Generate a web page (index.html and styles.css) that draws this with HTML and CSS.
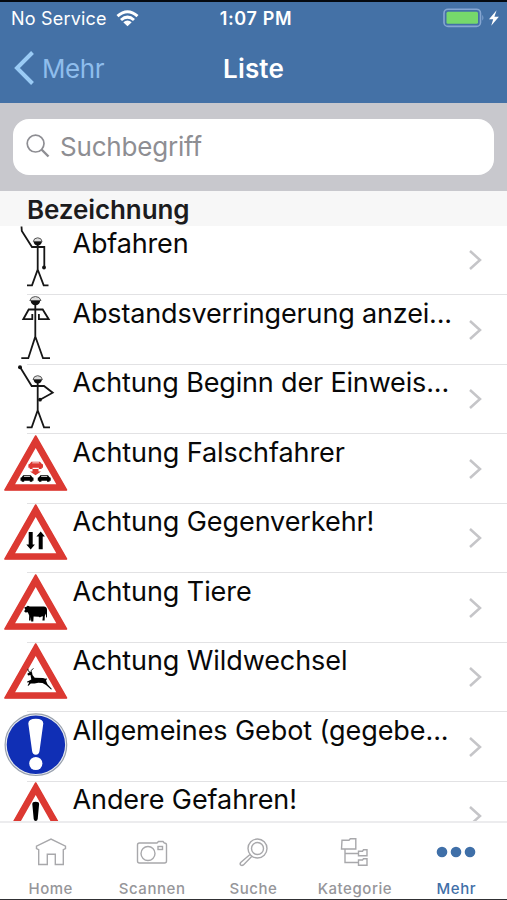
FILE: index.html
```html
<!DOCTYPE html>
<html lang="de">
<head>
<meta charset="utf-8">
<title>Liste</title>
<link rel="stylesheet" href="styles.css">
</head>
<body>
<div class="app">
  <header class="top">
    <div class="status">
      <div class="carrier"><span class="service">No Service</span>
        <svg width="23" height="17" viewBox="0 0 23 17" fill="none" stroke="#fff" stroke-width="3"><path d="M1.500 6.200Q11.500-2.800 21.500 6.200M5 10Q11.500 4.200 18 10"/><path d="M11.500 16.300L7.300 12.200Q11.500 8.800 15.700 12.200Z" fill="#fff" stroke="none"/></svg>
      </div>
      <span class="time">1:07 PM</span>
      <svg class="battery" width="58" height="20" viewBox="0 0 58 20"><rect x="1" y="1.200" width="36.500" height="17.200" rx="4" fill="none" stroke="#86a6d1" stroke-width="1.600"/><rect x="3.500" y="3.800" width="31.500" height="12" rx="1.500" fill="#76d96b"/><path d="M39.300 6.800q2.200 3 0 6z" fill="#86a6d1"/><path d="M53.600 2.300L46 11.200h4.200l-2 6.500 7.700-9h-4.500z" fill="#fff"/></svg>
    </div>
    <nav class="navbar">
      <a class="back"><svg width="21" height="34" viewBox="0 0 21 34" fill="none" stroke="#9acbf5" stroke-width="4"><path d="M18.500 1.500L3 17l15.500 15.500"/></svg><span>Mehr</span></a>
      <h1>Liste</h1>
    </nav>
  </header>
  <div class="search"><div class="field">
    <svg width="24" height="24" viewBox="0 0 24 24" fill="none" stroke="#8e8e93"><circle cx="9.600" cy="9.600" r="8.400" stroke-width="1.700"/><path d="M15.500 15.500l7 7" stroke-width="2.400"/></svg><span>Suchbegriff</span>
  </div></div>
  <h2 class="section"><span>Bezeichnung</span></h2>

  <svg class="defs" width="0" height="0">
    <symbol id="warn" viewBox="0 0 72 69.500"><path d="M35.700 1L5 55h61.500z" fill="#fff" stroke="#dc3932" stroke-width="1.600" stroke-linejoin="round"/><path d="M35.700.8L4.500 55.300h62.500zM35.700 13L56.300 49.300H15.100z" fill="#dc3932" fill-rule="evenodd"/></symbol>
    <symbol id="next" viewBox="0 0 14 22"><path d="M2 2L12 11 2 20" fill="none" stroke="#c5c5c8" stroke-width="2.500"/></symbol>
    <symbol id="car" viewBox="0 0 14 8"><path d="M3.200 1h7.600l1.500 1.900 1.200.6v3h-1.200V7.500H9.800V6.500H4.200v1H1.700v-1H.5v-3l1.200-.6z" fill="currentColor"/><path d="M4.200 1.700h5.600l.5.700H3.700z" fill="#fff"/></symbol>
  </svg>

  <main class="list">
    <div class="row"><svg class="pic line" viewBox="0 0 72 69.500"><path d="M21.500.5l.3 4.500L32 21h12.300v20M37.700 16v27.500L32 59.300h-5M37.700 43.500l6 15.800h4.800"/><path class="solid" d="M33.500 15.500h8.500q-.7 4-4.300 4t-4.200-4z"/><path class="helmet" d="M33.300 15.500q.6-3.700 4.400-3.700t4.400 3.700z"/><circle class="solid" cx="44" cy="41.500" r="1.900"/></svg><span class="label tight">Abfahren</span><svg class="next"><use href="#next"/></svg></div>
    <div class="row"><svg class="pic line" viewBox="0 0 72 69.500"><path d="M35.300 6v34.500l-7 21.700h-7M35.300 40.500L43 62.200h7M32.300 18v5.200h-9l5.400-9.700h14l6 9.700h-9.800V18"/><path class="solid" d="M30.500 4.500h9.800Q39.500 9.200 35.400 9.200t-4.900-4.700z"/><path class="helmet" d="M29.800 4.500Q31 .5 35.400.5T41 4.500z"/></svg><span class="label tight">Abstandsverringerung anzei...</span><svg class="next"><use href="#next"/></svg></div>
    <div class="row"><svg class="pic line" viewBox="0 0 72 69.500"><path d="M20 2l11.700 19H44l8.700 6.700L40 34.700M37.700 15v30.300l-6 17h-5M37.700 45.300l6.300 17h6"/><path class="solid" d="M33.500 14.500H42q-.7 4-4.300 4t-4.200-4z"/><path class="helmet" d="M33 14.500q.8-3.800 4.700-3.800t4.700 3.800z"/><circle class="solid" cx="20" cy="2.300" r="2"/><circle class="solid" cx="40" cy="34.700" r="1.900"/></svg><span class="label tight">Achtung Beginn der Einweis...</span><svg class="next"><use href="#next"/></svg></div>
    <div class="row"><svg class="pic" viewBox="0 0 72 69.500"><use href="#warn"/><use href="#car" x="20" y="39.300" width="14" height="8"/><use href="#car" x="37.200" y="39.300" width="14" height="8"/><g class="red"><use href="#car" x="27.700" y="25.500" width="16" height="9"/><path d="M32.500 34h6v2.500h2.500L35.500 40.300 30 36.500h2.500z" fill="currentColor"/></g></svg><span class="label">Achtung Falschfahrer</span><svg class="next"><use href="#next"/></svg></div>
    <div class="row"><svg class="pic" viewBox="0 0 72 69.500"><use href="#warn"/><path d="M28.700 28h4v12.500h2.200L30.700 45.500l-4.400-5h2.400zM38.700 45.300h4V32.500h2.200l-4.200-5-4.300 5h2.300z"/></svg><span class="label">Achtung Gegenverkehr!</span><svg class="next"><use href="#next"/></svg></div>
    <div class="row"><svg class="pic" viewBox="0 0 72 69.500"><use href="#warn"/><path d="M24.200 33.500l2.200-.8 1.400-1 2 .7 14 .1q3.200.3 3.200 3.200v7.800l-.9-.2-.2-3.700-1.100 2.400-.2 4.500h-2.200l.5-4.300-2 .5-1 .8-1-.8-5.300-.2-.3 5h-2.100l-.3-4.500-.3 3.500H29l.2-5-1.400-3.200-2.300.2-1.400-1.300 1.200-1.700z"/></svg><span class="label">Achtung Tiere</span><svg class="next"><use href="#next"/></svg></div>
    <div class="row"><svg class="pic" viewBox="0 0 72 69.500"><use href="#warn"/><path d="M27.300 30.700l3-2 1.700.6.500 2.700 2.200 2.800 8.300.1 2.500.9 1-.8.2 1.700-.7.8 1.500 3.700 4.400 4.800-.8.4-5.100-4.400-3.500-2.100-4.200-.1-3.800.8-3.800-.1-2.200 2.300-.9-.4 1.500-2.600-.4-.5-1.300.1-.5-.7 3-1.500 1.400-.7-.8-4.600-2.400.5z"/><path d="M30.300 29.500l-2.200-1.700-.2-2M31 29.500l.4-2.200 2-2" fill="none" stroke="#000" stroke-width=".9"/></svg><span class="label">Achtung Wildwechsel</span><svg class="next"><use href="#next"/></svg></div>
    <div class="row"><svg class="pic" viewBox="0 0 72 69.500"><circle cx="35.900" cy="31.700" r="30.800" fill="#e8ebf1" stroke="#99a1ae" stroke-width="1.200"/><circle cx="35.900" cy="31.700" r="29.200" fill="#102fb5"/><path d="M28.300 10.500q0-4.800 7.500-4.800t7.500 4.800L39.500 38q-.4 3.700-3.700 3.700T32.100 38z" fill="#fff"/><circle cx="35.800" cy="50.500" r="6.600" fill="#fff"/></svg><span class="label">Allgemeines Gebot (gegebe...</span><svg class="next"><use href="#next"/></svg></div>
    <div class="row"><svg class="pic" viewBox="0 0 72 69.500"><use href="#warn"/><path d="M32.300 22q0-2.300 3.400-2.300T39.100 22l-1.400 15q-.3 2-2 2t-2-2z"/><circle cx="35.700" cy="44" r="2.800"/></svg><span class="label">Andere Gefahren!</span><svg class="next"><use href="#next"/></svg></div>
  </main>

  <footer class="tabs">
    <div class="tab"><svg viewBox="0 0 40 32"><path d="M7.700 27.500V12.700L5.500 11.500V9.200L20 2l14.500 7.200v2.300l-2.200 1.200v14.800h-8V17.200h-8v10.300z"/></svg><span>Home</span></div>
    <div class="tab"><svg viewBox="0 0 40 32"><path d="M7.500 6H25l1.500-1.500H31L32.300 6q2.200 0 2.200 2v16q0 2-2 2h-25q-2 0-2-2V8q0-2 2-2z"/><circle cx="16" cy="16.500" r="7"/><rect x="26" y="9.500" width="4.500" height="3"/></svg><span>Scannen</span></div>
    <div class="tab"><svg viewBox="0 0 40 32"><circle cx="24.500" cy="11.500" r="9.500"/><circle cx="24.500" cy="11.500" r="6"/><path d="M17 17.500l-9.300 8q-1.200 1.700.2 2.700 1.200.8 2.500-.3l8.500-8.700"/></svg><span>Suche</span></div>
    <div class="tab"><svg viewBox="0 0 40 32"><path d="M7 3.300h7l1.300-1.500h5.500V12H6.500zM10 12v13.500h13.500M10 16.500h13.500M23.500 14.200h4l1-1.400H32v6H23.500zM23.500 23h4l1-1.300H32v6.500H23.500z"/></svg><span>Kategorie</span></div>
    <div class="tab active"><svg viewBox="0 0 40 32"><circle cx="6" cy="15" r="5.300"/><circle cx="20" cy="15" r="5.300"/><circle cx="34" cy="15" r="5.300"/></svg><span>Mehr</span></div>
  </footer>
</div>
</body>
</html>
```
FILE: styles.css
```css
* { box-sizing: border-box; }
body { margin: 0; background: #fff; font-family: Inter, "Liberation Sans", sans-serif; }
svg { display: block; flex: none; }
.defs { position: absolute; }
.app { width: 507px; height: 900px; display: flex; flex-direction: column; overflow: hidden; border-bottom: 1px solid #303033; }
.top { height: 103px; flex: none; background: #4471a6; border-top: 2px solid #05090f; color: #fff; }
.status { height: 32px; display: grid; grid-template-columns: 1fr auto 1fr; align-items: center; padding: 0 6px 0 11px; font-size: 18px; }
.carrier { display: flex; align-items: center; gap: 9px; }
.service { letter-spacing: .2px; }
.time { font-weight: 600; letter-spacing: .65px; }
.battery { justify-self: end; }
.navbar { height: 68px; display: grid; grid-template-columns: 1fr auto 1fr; align-items: center; padding: 0 14px; font-size: 26px; }
.back { display: flex; align-items: center; gap: 7px; color: #8fbdec; letter-spacing: -.4px; }
.navbar h1 { margin: 0; font-size: 26px; font-weight: 600; letter-spacing: .15px; }
.search { height: 88px; flex: none; padding: 16px 13px; background: #c8c8cd; }
.field { height: 56px; border-radius: 16px; background: #fff; display: flex; align-items: center; padding: 0 0 2px 13px; gap: 10px; font-size: 26px; letter-spacing: -.2px; color: #8e8e93; }
.section { margin: 0; height: 35px; flex: none; padding-left: 27px; background: #f7f7f7; font-size: 26px; line-height: 38px; font-weight: 600; letter-spacing: -.1px; color: #1c1c1e; }
.list { flex: 1; min-height: 0; overflow: hidden; }
.row { height: 69.5px; display: flex; align-items: flex-start; background: linear-gradient(#e2e2e4, #e2e2e4) 27px 100% / 100% 1.2px no-repeat; }
.pic { width: 72px; height: 69.5px; margin-right: .5px; }
.line { fill: none; stroke: #161616; stroke-width: 1.8; }
.line .solid { fill: #111; stroke: none; }
.line .helmet { fill: #ddd; stroke: #555; stroke-width: 1; }
.red { color: #dc3932; }
.label { flex: 1; font-size: 27px; line-height: 36px; letter-spacing: -.08px; white-space: nowrap; color: #080808; }
.tight { letter-spacing: -.16px; }
.next { width: 14px; height: 22px; margin: 23px 25px 0 0; }
.tabs { height: 78px; flex: none; border-top: 2px solid #ececee; display: grid; grid-template-columns: repeat(5, 1fr); background: #fff; }
.tab { display: flex; flex-direction: column; align-items: center; color: #96969a; font-size: 15px; font-weight: 500; line-height: 20px; letter-spacing: .55px; white-space: nowrap; }
.tab svg { width: 40px; height: 32px; margin: 14px 0 10px; fill: none; stroke: #a8a8ab; stroke-width: 1.4; }
.tab.active { color: #3f6fa8; }
.tab.active svg { fill: #3f6fa8; stroke: none; }
```
